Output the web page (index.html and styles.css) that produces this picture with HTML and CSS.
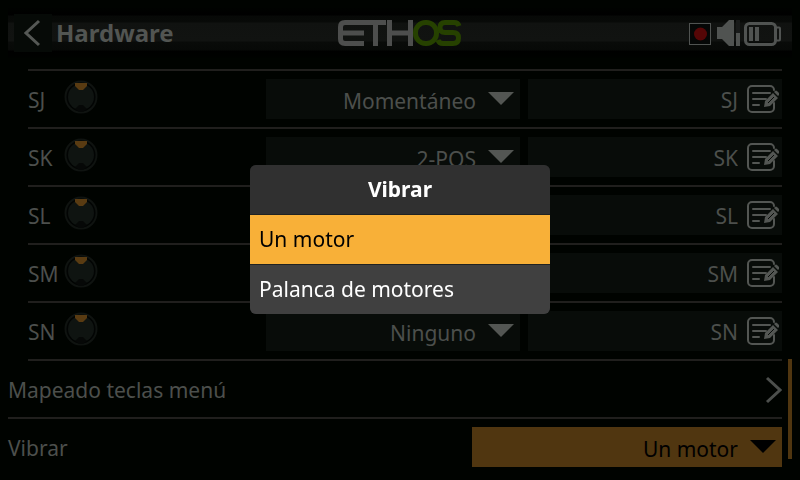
FILE: index.html
```
<!DOCTYPE html>
<html lang="es">
<head>
<meta charset="utf-8">
<title>Hardware</title>
<link rel="stylesheet" href="styles.css">
</head>
<body>
<svg class="defs" aria-hidden="true">
  <symbol id="knob" viewBox="0 0 34 34">
    <circle cx="17" cy="17" r="15.5" fill="#020403" stroke="#0f1310" stroke-width="2"/>
    <circle cx="17" cy="17" r="13" fill="#0f1411"/>
    <path d="M11 3h12v3l-4 4h-4l-4-4z" fill="#593b12"/>
    <path d="M15 25h4l4 4-4 3h-4l-4-3z" fill="#060807"/>
  </symbol>
  <symbol id="arrow" viewBox="0 0 26 13"><path d="M0 0h26L13 13z" fill="currentColor"/></symbol>
  <symbol id="edit" viewBox="0 0 32 28">
    <g fill="none" stroke="currentColor" stroke-width="2" stroke-linecap="round">
      <path d="M27 5a4 4 0 0 0-4-4H5a4 4 0 0 0-4 4v18a4 4 0 0 0 4 4h18a4 4 0 0 0 4-4v-5"/>
      <path d="M6 8h17M6 14h13M6 20h6"/>
    </g>
    <path d="M17 22l1-6 8-8 5 5-8 8zM27 7l1-1q1-1 2 0l2 2q1 1 0 2l-1 1z" fill="currentColor"/>
    <path d="M21 18l6-6" stroke="#080c09"/>
  </symbol>
</svg>

<header class="bar">
  <button class="back" aria-label="Atrás"><svg width="18" height="28" viewBox="0 0 18 28"><path d="M15 2L2 14l13 12" fill="none" stroke="currentColor" stroke-width="3"/></svg></button>
  <h1>Hardware</h1>
  <svg class="logo" width="124" height="26" viewBox="0 0 124 26" role="img" aria-label="ETHOS" fill="none" stroke-width="5">
    <g stroke="#4d4e4d">
      <path d="M26 2.500H7Q2.500 2.500 2.500 7v12q0 4.500 4.500 4.500h19M3 13h23M26 2.500h22M37.500 3v23M51.500 0v26M72.500 0v26M52 13h20"/>
    </g>
    <g stroke="#264100">
      <rect x="77.500" y="2.500" width="21" height="21" rx="10"/>
      <path d="M121 6q-1-3.500-5-3.500h-9q-5 0-5 5t5 5h8q5.500 0 5.500 5.500t-5.500 5.500h-10q-4 0-5-3.500"/>
    </g>
  </svg>
  <div class="status">
    <svg width="94" height="28" viewBox="0 0 94 28" role="img" aria-label="Grabación, volumen y batería">
      <rect x="1.500" y="4.500" width="21" height="21" fill="#050706" stroke="#505351"/>
      <circle cx="12.500" cy="15" r="6.500" fill="#550606"/>
      <path d="M29 8h5l7-7h5v26h-5l-7-7h-5z" fill="#505351"/>
      <path d="M48 1h4v13h-4z" fill="#191b1a"/><path d="M48 14h4v13h-4z" fill="#505351"/>
      <rect x="57.500" y="4.500" width="30" height="21" rx="4" fill="none" stroke="#505351" stroke-width="3"/>
      <path d="M61 8h4v14h-4zM67 8h4v14h-4z" fill="#505351"/>
      <path d="M88 8.500h3q1 0 1 1v11q0 1-1 1h-3" fill="none" stroke="#505351" stroke-width="2"/>
    </svg>
  </div>
</header>

<main class="page">
  <div class="list">
    <div class="group">
      <div class="row">
        <label class="name" for="t1">SJ</label><svg class="knob"><use href="#knob"/></svg>
        <div class="field"><select id="t1"><option>Momentáneo</option></select><svg class="arrow"><use href="#arrow"/></svg></div>
        <div class="field"><input type="text" value="SJ" aria-label="Nombre SJ"><svg class="edit"><use href="#edit"/></svg></div>
      </div>
      <div class="row">
        <label class="name" for="t2">SK</label><svg class="knob"><use href="#knob"/></svg>
        <div class="field"><select id="t2"><option>2-POS</option></select><svg class="arrow"><use href="#arrow"/></svg></div>
        <div class="field"><input type="text" value="SK" aria-label="Nombre SK"><svg class="edit"><use href="#edit"/></svg></div>
      </div>
      <div class="row">
        <label class="name" for="t3">SL</label><svg class="knob"><use href="#knob"/></svg>
        <div class="field"><select id="t3"><option></option></select><svg class="arrow"><use href="#arrow"/></svg></div>
        <div class="field"><input type="text" value="SL" aria-label="Nombre SL"><svg class="edit"><use href="#edit"/></svg></div>
      </div>
      <div class="row">
        <label class="name" for="t4">SM</label><svg class="knob"><use href="#knob"/></svg>
        <div class="field"><select id="t4"><option></option></select><svg class="arrow"><use href="#arrow"/></svg></div>
        <div class="field"><input type="text" value="SM" aria-label="Nombre SM"><svg class="edit"><use href="#edit"/></svg></div>
      </div>
      <div class="row">
        <label class="name" for="t5">SN</label><svg class="knob"><use href="#knob"/></svg>
        <div class="field"><select id="t5"><option>Ninguno</option></select><svg class="arrow"><use href="#arrow"/></svg></div>
        <div class="field"><input type="text" value="SN" aria-label="Nombre SN"><svg class="edit"><use href="#edit"/></svg></div>
      </div>
    </div>
    <a class="link" href="#menu"><span>Mapeado teclas menú</span><svg width="17" height="28" viewBox="0 0 17 28"><path d="M2 2l13 12L2 26" fill="none" stroke="currentColor" stroke-width="3"/></svg></a>
    <div class="row wide">
      <label for="vib">Vibrar</label>
      <div class="field active"><select id="vib"><option>Un motor</option></select><svg class="arrow"><use href="#arrow"/></svg></div>
    </div>
  </div>
  <div class="track"><div class="thumb"></div></div>
</main>

<div class="overlay">
  <div class="dialog" role="dialog" aria-modal="true" aria-labelledby="dt">
    <h2 id="dt">Vibrar</h2>
    <button class="option selected">Un motor</button>
    <button class="option">Palanca de motores</button>
  </div>
</div>
</body>
</html>
```
FILE: styles.css
```
* { box-sizing: border-box; }

body {
  margin: 0;
  min-height: 100vh;
  background: #000300;
  color: #4c4f4c;
  font: 21px/40px "Noto Sans", sans-serif;
}

button, input, select {
  font: inherit;
  color: inherit;
  border: 0;
  border-radius: 0;
  margin: 0;
}

.defs { position: absolute; width: 0; height: 0; }

.bar {
  display: grid;
  grid-template-columns: 1fr auto 1fr;
  grid-template-areas: "title logo status";
  align-items: center;
  height: 50px;
  margin: 8px 8px 11px;
  padding: 0 6px;
  background: linear-gradient(#000200 0, #000 7px, #070907 8px, #080a08 14px, #101210 15px, #111311 33px, #090b09 34px, #070907 42px, #000 43px, #000200 50px);
}

.back {
  grid-area: title;
  width: 38px;
  height: 38px;
  padding: 0;
  display: grid;
  place-items: center;
  background: #060a07;
  color: #555855;
}

h1 {
  grid-area: title;
  margin: 0 0 0 42px;
  color: #525552;
  font-size: 24px;
  font-weight: 700;
}

.logo { grid-area: logo; }
.status { grid-area: status; justify-self: end; display: flex; margin-right: 4px; }

.page { display: flex; padding: 0 8px; gap: 6px; }
.list { flex: 1; min-width: 0; }

.group {
  margin-left: 20px;
  border-bottom: 2px solid #201f1d;
}

.row {
  display: flex;
  align-items: center;
  gap: 8px;
  height: 58px;
  border-top: 2px solid #201f1d;
}

.row label, .link { padding-top: 2px; }
.name { width: 28px; }

.link {
  display: flex;
  align-items: center;
  justify-content: space-between;
  height: 56px;
  color: inherit;
  text-decoration: none;
}

.wide { justify-content: space-between; }

.field {
  position: relative;
  width: 254px;
  height: 40px;
  background: #080c09;
}

.wide .field { width: 40%; }
.active { background: #503610; color: #000; }

.field select, .field input {
  display: block;
  width: 100%;
  height: 40px;
  padding: 2px 44px 0 8px;
  background: transparent;
  appearance: none;
  text-align: right;
  text-align-last: right;
}

.knob { width: 34px; height: 34px; flex: none; margin: 0 auto 4px 0; }
.arrow, .edit { position: absolute; pointer-events: none; color: #535653; }
.arrow { right: 6px; top: 13px; width: 26px; height: 13px; }
.edit { right: 3px; top: 6px; width: 32px; height: 28px; }
.active .arrow { color: #000; }

.track { width: 4px; display: flex; flex-direction: column; justify-content: flex-end; padding-bottom: 16px; }
.thumb { height: 100px; background: #503610; }

.overlay {
  position: fixed;
  inset: 0;
  display: grid;
  place-items: center;
  padding-bottom: 1px;
}

.dialog {
  width: 300px;
  display: flex;
  flex-direction: column;
  gap: 1px;
  background: #202222;
  border-radius: 6px;
  overflow: hidden;
  color: #fff;
}

.dialog h2 {
  margin: 0;
  background: #303030;
  font-size: 21px;
  font-weight: 700;
  line-height: 49px;
  text-align: center;
}

.option {
  padding: 0 9px;
  background: #404040;
  line-height: 49px;
  text-align: left;
}

.selected { background: #f8b038; color: #000; }
```
